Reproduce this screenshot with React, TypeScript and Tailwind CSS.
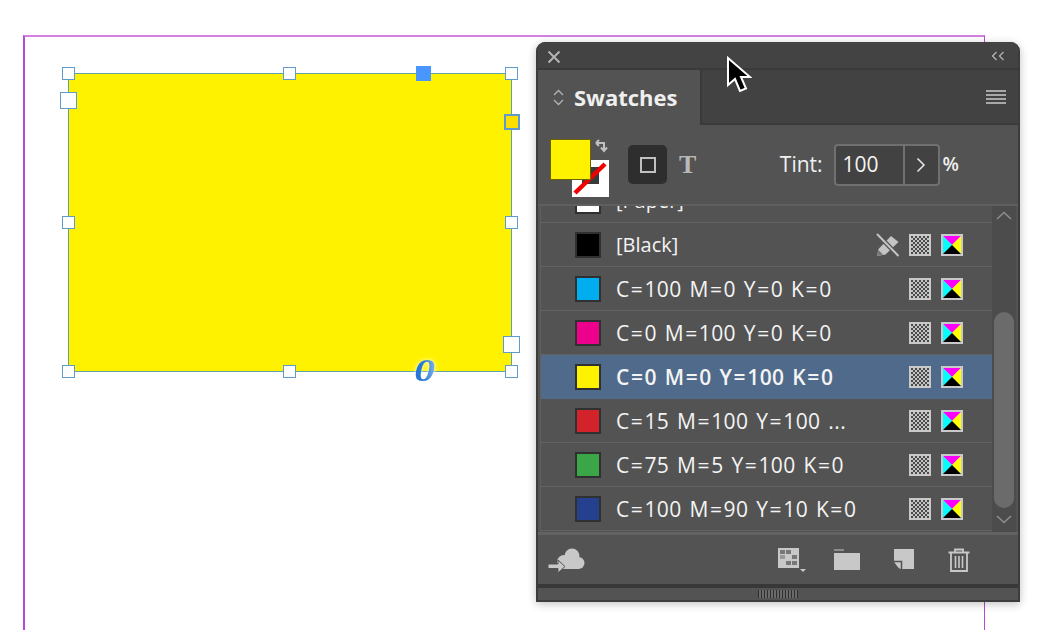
const font = { fontFamily: '"Open Sans", "Noto Sans", sans-serif' };

function Checker() {
  return (
    <svg width="22" height="22" viewBox="0 0 22 22" className="shrink-0">
      <defs>
        <pattern id="chk" width="4" height="4" patternUnits="userSpaceOnUse">
          <rect width="4" height="4" fill="#c4c4c4" />
          <rect width="2" height="2" fill="#4a4a4a" />
          <rect x="2" y="2" width="2" height="2" fill="#4a4a4a" />
        </pattern>
      </defs>
      <rect width="22" height="22" fill="#c9c9c9" />
      <rect x="2" y="2" width="18" height="18" fill="url(#chk)" />
    </svg>
  );
}

function Cmyk() {
  return (
    <svg width="22" height="22" viewBox="0 0 22 22" className="shrink-0">
      <rect width="22" height="22" fill="#c9c9c9" />
      <polygon points="2,2 20,2 11,11" fill="#ff00ff" />
      <polygon points="2,2 2,20 11,11" fill="#00ffff" />
      <polygon points="20,2 20,20 11,11" fill="#ffff00" />
      <polygon points="2,20 20,20 11,11" fill="#000" />
    </svg>
  );
}

function NoEdit() {
  return (
    <svg width="24" height="24" viewBox="0 0 24 24" className="shrink-0">
      <path d="M1 23l1.500-7L15 3l7.500 6L9.500 21.500z" fill="#c4c4c4" />
      <path d="M1 23l1.500-6 4.500 4.500z" fill="#777" />
      <path d="M1 1L22.500 23" stroke="#535353" strokeWidth="4.500" />
      <path d="M1 1L22.500 23" stroke="#c4c4c4" strokeWidth="2" />
    </svg>
  );
}

function Name({ text }: { text: string }) {
  const parts = text.split("=");
  return (
    <span className="ml-[15px] mt-[1px] text-[21px] leading-none text-[#f4f4f4] whitespace-nowrap tracking-[0.4px] [word-spacing:2px]">
      {parts.map((p, i) => (
        <span key={i}>
          {i > 0 && <span className="mx-[1.200px]">=</span>}
          {p}
        </span>
      ))}
    </span>
  );
}

type RowProps = { name: string; color: string; selected?: boolean; edit?: boolean };

function Row({ name, color, selected, edit }: RowProps) {
  return (
    <div
      className={`h-[44px] shrink-0 flex items-center border-b pl-[34px] pr-[29px] ${
        selected ? "bg-[#4f6a8a] border-[#4f6a8a] font-semibold" : "border-[#626262]"
      }`}
    >
      <div className="w-[26px] h-[26px] shrink-0 border-2 border-[#303030]" style={{ backgroundColor: color }} />
      {name.includes("=") ? (
        <Name text={name} />
      ) : (
        <span className="ml-[15px] text-[20px] leading-none text-[#f4f4f4] whitespace-nowrap">{name}</span>
      )}
      <div className="ml-auto flex items-center gap-[10px]">
        {edit && <div className="mr-[-1px]"><NoEdit /></div>}
        <Checker />
        <Cmyk />
      </div>
    </div>
  );
}

function Handle({ x, y, size = 13 }: { x: number; y: number; size?: number }) {
  return (
    <div
      className="absolute bg-white border-[1.500px] border-[#5f9bcf]"
      style={{ left: x - size / 2, top: y - size / 2, width: size, height: size }}
    />
  );
}

export default function App() {
  return (
    <div className="relative w-[1040px] h-[630px] bg-white overflow-hidden" style={font}>
      {/* page guide */}
      <div className="absolute left-[23px] top-[35px] w-[962px] h-[640px] border-2 border-[#b14bd6] border-t-[#d27fe0] border-b-0 border-r-[1.500px]" />

      {/* frame */}
      <div className="absolute left-[68px] top-[73px] w-[444px] h-[299px] bg-[#fff200] border border-[#5fa3a8]" />
      <Handle x={68.500} y={73.500} />
      <Handle x={289.500} y={73.500} />
      <Handle x={511.500} y={73.500} />
      <Handle x={68.500} y={222.500} />
      <Handle x={511.500} y={222.500} />
      <Handle x={68.500} y={371.500} />
      <Handle x={289.500} y={371.500} />
      <Handle x={511.500} y={371.500} />
      <Handle x={68.500} y={100} size={17} />
      <Handle x={511.500} y={344.500} size={17} />
      <div className="absolute left-[416px] top-[66px] w-[15px] h-[15px] bg-[#4a96ff]" />
      <div className="absolute left-[504px] top-[114px] w-[16px] h-[16px] bg-[#ffdf00] border-2 border-[#5f9bcf]" />
      <span
        className="absolute left-[414px] top-[353px] px-[3px] text-[31px] leading-[36px] font-bold italic scale-x-[1.350] bg-gradient-to-r from-[#1c6fd8] via-[#2d7fd8] to-[#a6ccf5] bg-clip-text text-transparent drop-shadow-[0_0_2px_#ffffff]"
        style={{ fontFamily: '"Liberation Serif", serif' }}
      >
        0
      </span>

      {/* swatches panel */}
      <div className="absolute left-[536px] top-[42px] w-[484px] h-[560px] flex flex-col bg-[#535353] border-2 border-t-0 border-[#3c3c3c] rounded-t-[9px] overflow-hidden shadow-[0_2px_8px_rgba(0,0,0,0.25)]">
        {/* title bar */}
        <div className="h-[28px] shrink-0 flex items-center justify-between bg-[#434343] border-b-2 border-[#3a3a3a] pl-[9px] pr-[13px]">
          <svg width="14" height="14" viewBox="0 0 14 14" className="mt-[3px]">
            <path d="M1.500 1.500l11 11M12.500 1.500l-11 11" stroke="#b4b4b4" strokeWidth="2" />
          </svg>
          <svg width="14" height="10" viewBox="0 0 14 10" className="mt-[1px]">
            <path d="M5.500 1L1.500 5l4 4M12.500 1l-4 4 4 4" stroke="#b8b8b8" strokeWidth="1.200" fill="none" />
          </svg>
        </div>

        {/* tab row */}
        <div className="h-[55px] shrink-0 flex bg-[#424242] border-b-2 border-[#3a3a3a]">
          <div className="w-[164px] h-[55px] shrink-0 flex items-center bg-[#535353] border-r-2 border-[#3a3a3a] pl-[15px]">
            <svg width="11" height="17" viewBox="0 0 11 17" className="shrink-0">
              <path d="M1 6l4.500-4.500L10 6M1 11l4.500 4.500L10 11" stroke="#b4b4b4" strokeWidth="1.300" fill="none" />
            </svg>
            <span className="ml-[10px] mt-[-2px] text-[22px] leading-none font-bold text-[#efefef]">Swatches</span>
          </div>
          <div className="ml-auto self-center mr-[12px] flex flex-col gap-[2px]">
            <div className="w-[20px] h-[2px] bg-[#a8a8a8]" />
            <div className="w-[20px] h-[2px] bg-[#a8a8a8]" />
            <div className="w-[20px] h-[2px] bg-[#a8a8a8]" />
            <div className="w-[20px] h-[2px] bg-[#a8a8a8]" />
          </div>
        </div>

        {/* controls */}
        <div className="h-[81px] shrink-0 flex items-center pl-[12px] border-b-2 border-[#5f5f5f]">
          <div className="relative w-[62px] h-[58px] shrink-0 mt-[7px]">
            <div className="absolute left-[22px] top-[21px] w-[37px] h-[37px] bg-white">
              <div className="absolute left-[10px] top-[7px] w-[17px] h-[17px] bg-[#3a3a3a]" />
              <svg width="37" height="37" viewBox="0 0 37 37" className="absolute inset-0">
                <path d="M3 33L33 4" stroke="#f00000" strokeWidth="4.500" />
              </svg>
            </div>
            <div className="absolute left-0 top-0 w-[41px] h-[41px] bg-[#fff200] border border-[#6b6400]" />
            <svg width="14" height="14" viewBox="0 0 14 14" className="absolute left-[45px] top-[0px]">
              <path d="M1 4h8v7M1 4l3-3M1 4l3 3M6 8.500l3 3.500 3-3.500" stroke="#c0c0c0" strokeWidth="2" fill="none" />
            </svg>
          </div>
          <div className="ml-[16px] w-[39px] h-[39px] rounded-[5px] bg-[#2e2e2e] flex items-center justify-center">
            <div className="w-[16px] h-[16px] border-2 border-[#c0c0c0]" />
          </div>
          <span
            className="ml-[12px] text-[26px] leading-none font-bold text-[#b8b8b8]"
            style={{ fontFamily: '"Liberation Serif", serif' }}
          >
            T
          </span>
          <span className="ml-auto text-[21px] leading-none font-medium text-[#f0f0f0]">Tint:</span>
          <div className="ml-[11px] w-[106px] h-[42px] flex rounded-[4px] border-2 border-[#707070] bg-[#424242]">
            <span className="flex-1 flex items-center pl-[7px] text-[21px] leading-none text-[#f4f4f4]">100</span>
            <div className="w-[35px] flex items-center justify-center border-l-2 border-[#707070]">
              <svg width="10" height="16" viewBox="0 0 10 16">
                <path d="M1.500 1.500L8 8l-6.500 6.500" stroke="#e8e8e8" strokeWidth="1.500" fill="none" />
              </svg>
            </div>
          </div>
          <span className="ml-[3px] mr-[59px] text-[19px] leading-none font-semibold text-[#f0f0f0]">%</span>
        </div>

        {/* list */}
        <div className="flex-1 min-h-0 flex overflow-hidden border-b-[3px] border-[#626262]">
          <div className="flex-1 min-w-0 overflow-hidden flex flex-col ml-[2px] border-l border-[#5f5f5f]">
            <div className="mt-[-27px] flex flex-col">
              <div className="h-[44px] shrink-0 flex items-center border-b border-[#626262] pl-[34px]">
                <div className="w-[26px] h-[26px] shrink-0 border-2 border-[#303030] bg-white" />
                <span className="ml-[15px] text-[20px] leading-none text-[#f4f4f4]">[Paper]</span>
              </div>
              <Row name="[Black]" color="#000000" edit />
              <Row name="C=100 M=0 Y=0 K=0" color="#00aeef" />
              <Row name="C=0 M=100 Y=0 K=0" color="#ec008c" />
              <Row name="C=0 M=0 Y=100 K=0" color="#fff200" selected />
              <Row name="C=15 M=100 Y=100 ..." color="#d2232a" />
              <Row name="C=75 M=5 Y=100 K=0" color="#3aa648" />
              <Row name="C=100 M=90 Y=10 K=0" color="#25408f" />
            </div>
          </div>
          {/* scrollbar */}
          <div className="w-[24px] shrink-0 mr-[2px] bg-[#4c4c4c] flex flex-col items-center">
            <svg width="16" height="9" viewBox="0 0 16 9" className="mt-[5px] shrink-0">
              <path d="M1 8l7-6.500L15 8" stroke="#8f8f8f" strokeWidth="1.500" fill="none" />
            </svg>
            <div className="mt-[92px] w-[20px] h-[196px] shrink-0 rounded-full bg-[#6b6b6b]" />
            <svg width="16" height="9" viewBox="0 0 16 9" className="mt-[7px] shrink-0">
              <path d="M1 1l7 6.500L15 1" stroke="#8f8f8f" strokeWidth="1.500" fill="none" />
            </svg>
          </div>
        </div>

        {/* footer */}
        <div className="h-[53px] shrink-0 flex items-center pl-[10px] border-b-[4px] border-[#383838]">
          <svg width="38" height="26" viewBox="0 0 38 26" className="shrink-0">
            <circle cx="24" cy="9" r="7.500" fill="#c8c8c8" />
            <circle cx="30.500" cy="16" r="6" fill="#c8c8c8" />
            <circle cx="16" cy="15" r="7" fill="#c8c8c8" />
            <rect x="16" y="14" width="15" height="8" fill="#c8c8c8" />
            <path d="M0 17h10v-4l7 6.500-7 6.500v-4.500H0z" fill="#c8c8c8" stroke="#535353" strokeWidth="1" />
          </svg>
          <svg width="28" height="26" viewBox="0 0 28 26" className="shrink-0 ml-[192px]">
            <rect x="0" y="1" width="21" height="20" fill="#c8c8c8" />
            <rect x="2" y="3" width="5" height="4" fill="#777" />
            <rect x="8" y="3" width="5" height="4" fill="#777" />
            <rect x="14" y="8" width="5" height="4" fill="#777" />
            <rect x="8" y="14" width="5" height="4" fill="#777" />
            <rect x="14" y="14" width="5" height="4" fill="#777" />
            <rect x="2" y="8" width="5" height="4" fill="#999" />
            <path d="M22 22h6l-3 3z" fill="#c8c8c8" />
          </svg>
          <svg width="26" height="21" viewBox="0 0 26 21" className="shrink-0 ml-[28px]">
            <path d="M0 0.500h10v1H0z" fill="#c8c8c8" />
            <path d="M0 4h26v17H0z" fill="#c8c8c8" />
          </svg>
          <svg width="21" height="21" viewBox="0 0 21 21" className="shrink-0 ml-[34px]">
            <path d="M0 0h20v20H6.500L0 13z" fill="#c8c8c8" />
            <path d="M0 12.500h7.500V20" stroke="#535353" strokeWidth="1.500" fill="none" />
            <path d="M1 14.500h4.500V20z" fill="#c8c8c8" />
          </svg>
          <svg width="22" height="24" viewBox="0 0 22 24" className="shrink-0 ml-[33px]">
            <path d="M0.500 4.500h21M7 4.500V1.500h8v3" stroke="#c8c8c8" strokeWidth="1.800" fill="none" />
            <path d="M3 5v18h16V5" stroke="#c8c8c8" strokeWidth="1.800" fill="none" />
            <path d="M7.500 8v12M11 8v12M14.500 8v12" stroke="#c8c8c8" strokeWidth="1.600" />
          </svg>
        </div>

        {/* gripper */}
        <div className="h-[12px] shrink-0 flex items-center justify-center bg-[#535353]">
          <div className="w-[40px] h-[8px] bg-[repeating-linear-gradient(90deg,#2f2f2f_0,#2f2f2f_1px,#6a6a6a_1px,#6a6a6a_3px)]" />
        </div>
      </div>

      {/* mouse pointer */}
      <svg width="26" height="38" viewBox="0 0 26 38" className="absolute left-[726px] top-[56px]">
        <path d="M2 2v27l7-6 5 12 6-2.500-5-11.500h9z" fill="#000" stroke="#fff" strokeWidth="2" strokeLinejoin="miter" />
      </svg>
    </div>
  );
}
